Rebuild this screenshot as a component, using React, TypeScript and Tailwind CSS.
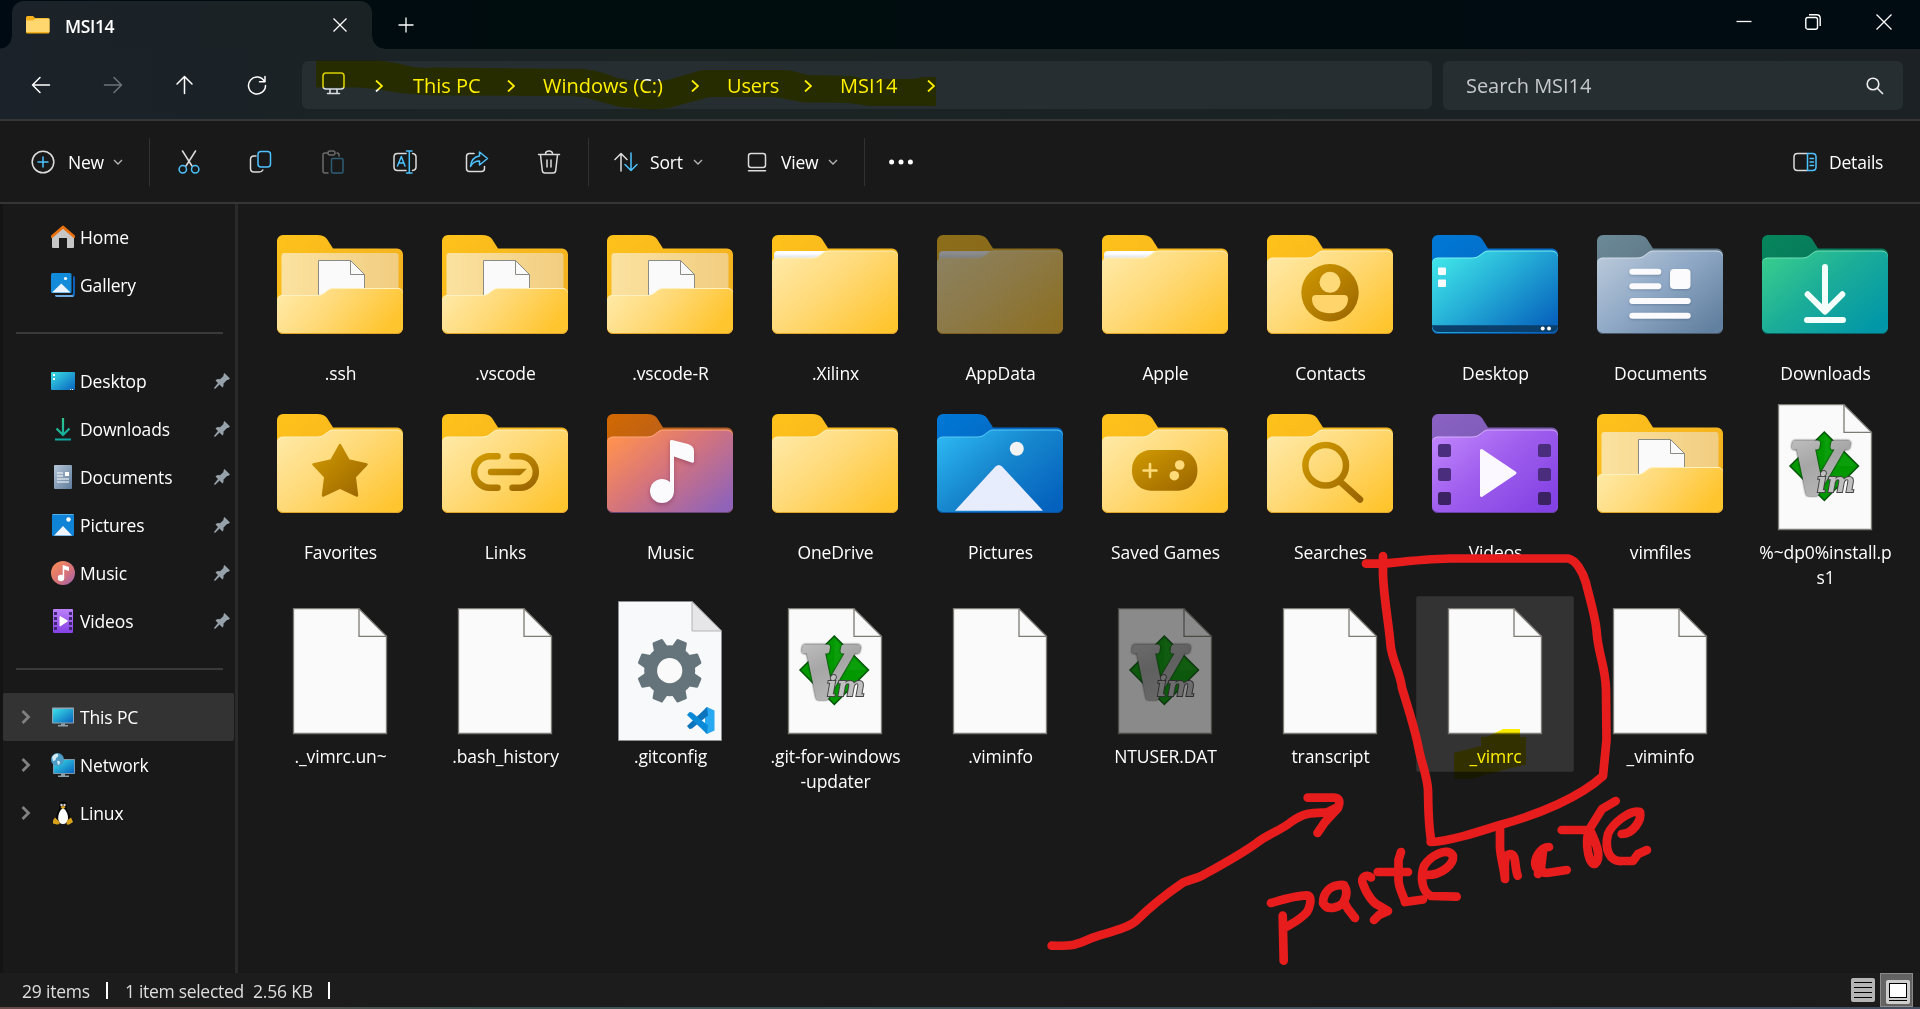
import React from "react";

type Colors = { back: [string, string]; front: [string, string, string]; edge: string; hi: string };

const PALETTES: Record<string, Colors> = {
  yellow: { back: ["#ffc21a", "#eeab22"], front: ["#ffe8a3", "#ffd976", "#ffc52f"], edge: "#e3a42a", hi: "#fff0bd" },
  music: { back: ["#d26900", "#93504b"], front: ["#ff9150", "#d6747b", "#9163b8"], edge: "#6b4478", hi: "#ffa67c" },
  blue: { back: ["#0078d6", "#0a55ab"], front: ["#2bb4f0", "#1787ce", "#0461bd"], edge: "#08529f", hi: "#5ac8f7" },
  desktop: { back: ["#0078d6", "#0860b5"], front: ["#3fe3e8", "#24acd6", "#0763bd"], edge: "#0b4d93", hi: "#7cf0f0" },
  docs: { back: ["#6c8a98", "#49586a"], front: ["#b6c6d8", "#90a9c6", "#62809f"], edge: "#475668", hi: "#d0dce8" },
  down: { back: ["#06865c", "#0a6259"], front: ["#36cb8e", "#1cad98", "#0096a8"], edge: "#0a6166", hi: "#6fe0b3" },
  video: { back: ["#8a62c4", "#6c51a0"], front: ["#bd82fb", "#9f5eed", "#8342e3"], edge: "#6b3fa8", hi: "#d5adff" },
};

const BACK = "M9 25a6 6 0 0 1 6-6H49q7 0 10 4L65 32.500H129a6 6 0 0 1 6 6V112a6 6 0 0 1-6 6H15a6 6 0 0 1-6-6Z";
const FRONT = "M9 47a5.500 5.500 0 0 1 5.500-5.500H49q5 0 9-3.500l3-2.300q2-1.200 4-1.200H129a6 6 0 0 1 6 6V110a6 6 0 0 1-6 6H15a6 6 0 0 1-6-6Z";
const FRONT_OPEN = "M9 84a5 5 0 0 1 5-5H49q5 0 8-3l4-3q2-1 4-1H130a5 5 0 0 1 5 5V110a6 6 0 0 1-6 6H15a6 6 0 0 1-6-6Z";

function Folder({ kind, dim = false, open = false, papers = false, children }: { kind: string; dim?: boolean; open?: boolean; papers?: boolean; children?: React.ReactNode }) {
  const c = PALETTES[kind];
  const id = React.useId();
  const b = id + "b";
  const f = id + "f";
  const front = open ? FRONT_OPEN : FRONT;
  return (
    <svg viewBox="0 0 144 144" className={dim ? "size-36 opacity-50" : "size-36"}>
      <defs>
        <linearGradient id={b} x1="0" y1="0" x2="1" y2="1"><stop offset="0" stopColor={c.back[0]} /><stop offset="1" stopColor={c.back[1]} /></linearGradient>
        <linearGradient id={f} gradientUnits="userSpaceOnUse" x1="30" y1={open ? 60 : 30} x2="108" y2="125">
          <stop offset="0" stopColor={c.front[0]} /><stop offset="0.45" stopColor={c.front[1]} /><stop offset="1" stopColor={c.front[2]} />
        </linearGradient>
        <linearGradient id={id + "i"} x1="0" y1="0" x2="1" y2="0"><stop offset="0" stopColor="#fbe2a0" /><stop offset="1" stopColor="#f1cd80" /></linearGradient>
        <linearGradient id={id + "m"} x1="0" y1="0" x2="1" y2="1"><stop offset="0" stopColor="#d19a00" /><stop offset="1" stopColor="#9a6500" /></linearGradient>
        <linearGradient id={id + "p"} x1="0" y1="0" x2="0" y2="1"><stop offset="0.3" stopColor="#ffffff" /><stop offset="1" stopColor="#d5dbe2" /></linearGradient>
      </defs>
      <path d={BACK} fill={`url(#${b})`} />
      {open && (
        <>
          <rect x="13.500" y="37" width="117" height="60" rx="3" fill={`url(#${id}i)`} />
          <path d="M50.500 44.500H82.500L96.500 58.500V90H50.500Z" fill="#fafafa" stroke="#8b8b86" />
          <path d="M82.500 44.500V58.500H96.500" fill="none" stroke="#8b8b86" />
        </>
      )}
      {papers && <path d="M11 39a4 4 0 0 1 4-4H66L57 43H11Z" fill={`url(#${id}p)`} />}
      <path d={front} transform="translate(0 2)" fill={c.edge} />
      <path d={front} fill={c.hi} />
      <path d={front} transform="translate(0 1)" fill={`url(#${f})`} />
      <g fill={`url(#${id}m)`} stroke={`url(#${id}m)`} strokeWidth="0">{children}</g>
    </svg>
  );
}

const WHITE = { fill: "#fbfbfd" };

function PageShape({ children, dim = false }: { children?: React.ReactNode; dim?: boolean }) {
  return (
    <svg viewBox="0 0 144 144" className={dim ? "size-36 opacity-50" : "size-36"}>
      <path d="M25.500 9.700H91L118.500 37.300V134.500H25.500Z" fill="#fafafa" stroke="#7d7b76" strokeWidth="1.300" />
      <path d="M91 9.700V37.300H118.500" fill="none" stroke="#7d7b76" strokeWidth="1.300" />
      {children}
    </svg>
  );
}

function VimMark() {
  const id = React.useId();
  return (
    <g>
      <defs>
        <linearGradient id={id} x1="0" y1="0" x2="0.300" y2="1"><stop offset="0" stopColor="#c8c8c8" /><stop offset="0.500" stopColor="#a6a6a6" /><stop offset="1" stopColor="#b8b8b8" /></linearGradient>
      </defs>
      <path d="M71.300 37L105.500 71L71.300 105.500L37 71Z" fill="#019800" stroke="#04550a" strokeWidth="1.500" />
      <path d="M71.300 39.500L103 71L71.300 71Z" fill="#16a516" opacity="0.500" />
      <g className="drop-shadow-[0_0_1px_#111111]">
        <text x="37.500" y="98" fontFamily="DejaVu Serif" fontWeight="700" fontStyle="italic" fontSize="70" textLength="52" lengthAdjust="spacingAndGlyphs" fill={`url(#${id})`} stroke={`url(#${id})`} strokeWidth="5" strokeLinejoin="round">V</text>
      </g>
      <text x="64" y="96.500" fontFamily="DejaVu Serif" fontWeight="700" fontStyle="italic" fontSize="27" textLength="38" lengthAdjust="spacingAndGlyphs" fill="#c0c0c0" stroke="#444" strokeWidth="2" paintOrder="stroke">im</text>
    </g>
  );
}

function GearPage() {
  return (
    <svg viewBox="0 0 144 144" className="size-36">
      <path d="M20.500 2.500H94.500L123.500 32V141.500H20.500Z" fill="#f8f9fa" stroke="#8c9092" />
      <path d="M94 3V32H123.500Z" fill="#e6e6e8" stroke="#a5a5a8" strokeWidth="0.800" />
      <g transform="translate(71.700 71.700)" fill="#64747a">
        {[22.5, 67.5, 112.5, 157.5, 202.5, 247.5, 292.5, 337.5].map((a) => (
          <path key={a} transform={`rotate(${a})`} d="M-8 -20L-5.500 -31.500Q-5.200 -32.500 -4 -32.500H4Q5.200 -32.500 5.500 -31.500L8 -20Z" />
        ))}
        <circle r="25.500" />
        <circle r="12.600" fill="#fafafb" />
      </g>
      <path d="M109 108L116.500 111.500V131.500L109 135L107 133V110Z" fill="#29a8f2" />
      <path d="M109 108L110 116.500L94 129.500L91.500 130L89 127Z" fill="#0b74bd" />
      <path d="M109 135L110 126.500L94 113.500L91.500 113L89 116Z" fill="#0a8ad6" />
    </svg>
  );
}

type Item = { name: string; second?: string; art: React.ReactNode; selected?: boolean };

const NoteArt = (
  <g {...WHITE} className="drop-shadow-[0_2px_2px_rgba(80,20,60,0.35)]">
    <circle cx="64" cy="96" r="12" />
    <path d="M72 46.500Q72 44.500 74 45L90 49Q96 51 96 56V66Q96 68.500 93.500 67.500L76 61.500V96H72Z" />
  </g>
);

const items: Item[] = [
  { name: ".ssh", art: <Folder kind="yellow" open /> },
  { name: ".vscode", art: <Folder kind="yellow" open /> },
  { name: ".vscode-R", art: <Folder kind="yellow" open /> },
  { name: ".Xilinx", art: <Folder kind="yellow" papers /> },
  { name: "AppData", art: <Folder kind="yellow" papers dim /> },
  { name: "Apple", art: <Folder kind="yellow" papers /> },
  { name: "Contacts", art: (
    <Folder kind="yellow">
      <circle cx="72" cy="76.700" r="28.700" />
      <circle cx="72" cy="66.300" r="10.500" fill="#ffda79" />
      <path d="M58 79H86Q90 79 90 83C90 92 82 97.300 72 97.300S54 92 54 83Q54 79 58 79Z" fill="#ffd56b" />
    </Folder>) },
  { name: "Desktop", art: (
    <Folder kind="desktop">
      <rect x="15" y="51.500" width="8" height="7.500" rx="1" {...WHITE} />
      <rect x="15" y="63.500" width="8" height="7.500" rx="1" {...WHITE} />
      <path d="M9 109.300H135V110Q134 116 128 116H16Q10 116 9 110Z" fill="#0a3f6b" />
      <circle cx="119.700" cy="112.500" r="2" {...WHITE} /><circle cx="126" cy="112.500" r="2" {...WHITE} />
    </Folder>) },
  { name: "Documents", art: (
    <Folder kind="docs">
      <g {...WHITE} className="drop-shadow-[0_1px_1px_rgba(40,60,90,0.3)]">
        <rect x="41.300" y="52.700" width="32" height="6" rx="3" /><rect x="41.300" y="67.200" width="32" height="6" rx="3" />
        <rect x="41.300" y="82" width="61.400" height="6" rx="3" /><rect x="41.300" y="96.700" width="61.400" height="6" rx="3" />
        <rect x="82" y="53" width="20.500" height="20" rx="4" />
      </g>
    </Folder>) },
  { name: "Downloads", art: (
    <Folder kind="down">
      <path d="M72 51V95M54.700 78.300L72 95.500L89.300 78.300M54 104H90" fill="none" stroke="#f4fffb" strokeWidth="6" strokeLinecap="round" strokeLinejoin="round" />
    </Folder>) },
  { name: "Favorites", art: (
    <Folder kind="yellow">
      <path d="M72 50L80.700 65.500L98.500 69.500L86.700 82L89 100.500L72 92.700L55 100.500L57.300 82L45.500 69.500L63.300 65.500Z" strokeWidth="2.500" strokeLinejoin="round" />
    </Folder>) },
  { name: "Links", art: (
    <Folder kind="yellow">
      <path d="M64.500 61.200H57a15.800 15.800 0 0 0 0 31.600H64.500M79.500 61.200H87a15.800 15.800 0 0 1 0 31.600H79.500M58 77H86.010L86 77.010" fill="none" strokeWidth="6.500" strokeLinecap="round" />
    </Folder>) },
  { name: "Music", art: <Folder kind="music">{NoteArt}</Folder> },
  { name: "OneDrive", art: <Folder kind="yellow" /> },
  { name: "Pictures", art: (
    <Folder kind="blue">
      <circle cx="88.800" cy="53.700" r="7" fill="#f3f3f3" />
      <path d="M27 115.700L67.500 71.500Q70.800 68.500 74 71.500L115 115.700Z" fill="#e8edfd" />
    </Folder>) },
  { name: "Saved Games", art: (
    <Folder kind="yellow">
      <rect x="39" y="55" width="65.400" height="40.700" rx="19" />
      <path d="M57 69V82M50.500 75.500H63.500" fill="none" stroke="#ffda79" strokeWidth="2.600" strokeLinecap="round" />
      <circle cx="86.700" cy="70" r="4.800" fill="#ffda79" /><circle cx="81.300" cy="80.700" r="4.800" fill="#ffda79" />
    </Folder>) },
  { name: "Searches", art: (
    <Folder kind="yellow">
      <path d="M88 70.300a20.300 20.300 0 1 1-40.600 0a20.300 20.300 0 1 1 40.600 0M82 86.500L102 104.500" fill="none" strokeWidth="6.500" strokeLinecap="round" />
    </Folder>) },
  { name: "Videos", art: (
    <Folder kind="video">
      <g fill="#4a2d7c">
        <rect x="15" y="49" width="13" height="13" rx="2.500" /><rect x="115" y="49" width="13" height="13" rx="2.500" />
        <rect x="15" y="73" width="13" height="13" rx="2.500" /><rect x="115" y="73" width="13" height="13" rx="2.500" />
        <rect x="15" y="97" width="13" height="13" rx="2.500" fill="#3b2263" /><rect x="115" y="97" width="13" height="13" rx="2.500" fill="#3b2263" />
      </g>
      <path d="M58.500 55.500L92 78L58.500 100.500Z" fill="#fbf8ff" stroke="#fbf8ff" strokeWidth="3" strokeLinejoin="round" />
    </Folder>) },
  { name: "vimfiles", art: <Folder kind="yellow" open /> },
  { name: "%~dp0%install.p", second: "s1", art: <PageShape><VimMark /></PageShape> },
  { name: "._vimrc.un~", art: <PageShape /> },
  { name: ".bash_history", art: <PageShape /> },
  { name: ".gitconfig", art: <GearPage /> },
  { name: ".git-for-windows", second: "-updater", art: <PageShape><VimMark /></PageShape> },
  { name: ".viminfo", art: <PageShape /> },
  { name: "NTUSER.DAT", art: <PageShape dim><VimMark /></PageShape> },
  { name: "transcript", art: <PageShape /> },
  { name: "_vimrc", art: <PageShape />, selected: true },
  { name: "_viminfo", art: <PageShape /> },
];

function FileTile({ item }: { item: Item }) {
  return (
    <div className={`flex w-[158px] flex-col items-center self-start rounded-xs border pt-0.5 ${item.selected ? "h-44 border-[#2c2c2c] bg-[#333333]" : "border-transparent"}`}>
      {item.art}
      <div className="mt-px pl-px text-center text-[17.5px]/[25px] tracking-[-0.1px] whitespace-nowrap text-white">
        <div>{item.name}</div>
        {item.second && <div>{item.second}</div>}
      </div>
    </div>
  );
}

/* Sidebar icons, all on a 24px grid */
const side: Record<string, React.ReactNode> = {
  Home: (<><path d="M1 11L12 2L23 11V22Q23 23 22 23H16V13H8V23H2Q1 23 1 22Z" fill="#c6c6c6" /><path d="M1 11.500L12 2L23 11.500" fill="none" stroke="#e8710c" strokeWidth="2.800" strokeLinejoin="round" strokeLinecap="round" /></>),
  Gallery: (<><path d="M22 3Q24 3 24 5V21Q24 24 21 24H6Q4 24 4 22H20Q22 22 22 20Z" fill="#0b62bd" /><path d="M4 22H20.500Q22 22 23 22.500L22 24H6Q4 24 4 22Z" fill="#6da8df" /><rect width="20.500" height="20" rx="1.500" fill="#128bdb" /><path d="M1 19.500L10.300 10.500L19.500 19.500Z" fill="#e9f2ff" /><circle cx="14.500" cy="5.500" r="1.600" fill="#fff" /></>),
  Desktop: (<><defs><linearGradient id="sd" x1="0" y1="0" x2="1" y2="1"><stop stopColor="#3bdfe6" /><stop offset="1" stopColor="#0863bf" /></linearGradient></defs><rect y="3" width="24" height="18" rx="1" fill="url(#sd)" /><path d="M2 5h2v2h-2zM2 9h2v2h-2zM19 20h1v1h-1zM21 20h1v1h-1z" fill="#fff" /></>),
  Downloads: (<><defs><linearGradient id="sl" gradientUnits="userSpaceOnUse" x1="6" y1="2" x2="18" y2="24"><stop stopColor="#34cc8c" /><stop offset="1" stopColor="#079fa5" /></linearGradient></defs><path d="M12 1V18M5.500 11.500L12 18L18.500 11.500M4 22.500H20" fill="none" stroke="url(#sl)" strokeWidth="2.200" /></>),
  Documents: (<><defs><linearGradient id="sc" x1="0" y1="0" x2="1" y2="1"><stop stopColor="#b5c6d8" /><stop offset="1" stopColor="#5f7c9c" /></linearGradient></defs><rect x="3" width="18" height="24" rx="1" fill="url(#sc)" /><path d="M6 8H12M6 11H12M6 14H18M6 17H18" stroke="#fff" strokeWidth="1.100" /><rect x="14" y="7" width="4" height="4" fill="#fff" /></>),
  Pictures: (<><rect x="1" y="1" width="22" height="22" rx="1.500" fill="#0f83d6" /><path d="M1.500 1.500h21" stroke="#53b1ee" /><path d="M3 22.500L12 13L21 22.500Z" fill="#f0f4ff" /><circle cx="17.500" cy="6.500" r="2.200" fill="#fff" /></>),
  Music: (<><defs><linearGradient id="sm" x1="0" y1="0" x2="1" y2="1"><stop stopColor="#fb8f52" /><stop offset="0.600" stopColor="#d4707c" /><stop offset="1" stopColor="#9a62b3" /></linearGradient></defs><circle cx="12" cy="12" r="12" fill="url(#sm)" /><circle cx="10" cy="17" r="3.200" fill="#fff" /><path d="M11.700 4L18 6V10L13.200 8.500V17H11.700Z" fill="#fff" /></>),
  Videos: (<><defs><linearGradient id="sv" x1="0" y1="0" x2="0" y2="1"><stop stopColor="#bb80fa" /><stop offset="1" stopColor="#8441e3" /></linearGradient></defs><rect x="2" width="20" height="24" rx="1" fill="url(#sv)" /><path d="M3 3h3v3h-3zM3 8h3v3h-3zM3 13h3v3h-3zM3 18h3v3h-3zM18 3h3v3h-3zM18 8h3v3h-3zM18 13h3v3h-3zM18 18h3v3h-3z" fill="#3f2672" /><path d="M9 7.500L16.500 12L9 17Z" fill="#fff" stroke="#fff" strokeLinejoin="round" /></>),
  "This PC": (<><rect x="1" y="2.500" width="22" height="16" rx="0.800" fill="#8fa6b5" /><rect x="2" y="4" width="20" height="13.500" fill="url(#sd)" /><path d="M10 18.500h4v1.500h3v1.500H7v-1.500h3z" fill="#8fa0ad" /></>),
  Network: (<><rect x="2" y="6" width="22" height="15" rx="0.800" fill="#7c98aa" /><rect x="3" y="7" width="20" height="13" fill="url(#sd)" /><path d="M10 21h4v1.500h4V24H7v-1.500h3z" fill="#8fa0ad" /><circle cx="6.500" cy="6.500" r="6.500" fill="#4d9ac4" /><path d="M1 4Q4 0 7 1Q8 4 5 5Q5 8 2 8ZM6 8Q9 7 9 10Q8 12 7 12Z" fill="#d3ebf5" /></>),
  Linux: (<><path d="M12 0C8.500 0 8.200 3 8.500 6C8 10 4.500 12 5 18L7 22H17L19.500 18C19.500 12 16 10 15.500 6C15.800 3 15.500 0 12 0Z" fill="#080808" /><path d="M12 7C9 9 7 13 7.200 18Q8 23 12 23T17 18C17.200 13 15 9 12 7Z" fill="#fff" /><circle cx="10.500" cy="4" r="1.200" fill="#ddd" /><circle cx="13.500" cy="4" r="1.200" fill="#ddd" /><path d="M9.500 6Q12 4 14.500 6Q12 9.500 9.500 6Z" fill="#e0a316" /><path d="M4 16.500L9 21.500Q8.500 24 6 23.500L2 22.500Q1.500 19 4 16.500ZM20 16.500L16 19.500L15.500 23Q17 24.500 19 23L22 21Z" fill="#d9a21b" /></>),
};

function SideRow({ name, pin, expand, active }: { name: string; pin?: boolean; expand?: boolean; active?: boolean }) {
  return (
    <div className={`flex h-12 w-[231px] items-center rounded-xs ${active ? "bg-[#333333]" : ""}`}>
      <div className="flex w-12 justify-center pr-0.5">
        {expand && (<svg viewBox="0 0 10 16" className="h-4 w-2.5"><path d="M1.500 2L7.500 8L1.500 14" fill="none" stroke="#818181" strokeWidth="2.800" /></svg>)}
      </div>
      <svg viewBox="0 0 24 24" className="size-6">{side[name]}</svg>
      <span className="ml-[5px] flex-1 text-[17.5px]/6 tracking-[-0.15px] whitespace-nowrap">{name}</span>
      {pin && (<svg viewBox="0 0 16 16" className="mr-1 size-4"><path d="M10.500 0L16 5.500L14 7L13 7L9.500 10.500Q10 13 8.500 14.500L5.500 11.500L1 16L0 15L4 10L1.500 7.500Q3.500 5.500 6 6.300L9.500 3V1.500Z" fill="#97a1a9" /></svg>)}
    </div>
  );
}

const Rule = () => (<div className="flex h-12 items-center pb-px"><div className="ml-[13px] h-0.5 w-[207px] bg-[#3a3a3a]" /></div>);
const Crumb = () => (<svg viewBox="0 0 8 12" className="h-3 w-2 shrink-0"><path d="M1 0.500L7 6L1 11.500" fill="none" stroke="#fff" strokeWidth="1.800" /></svg>);
const Down = () => (<svg viewBox="0 0 10 6" className="h-1.5 w-2.5 shrink-0"><path d="M1 1L5 5L9 1" fill="none" stroke="#b5b5b5" strokeWidth="1.300" /></svg>);
const Divider = ({ className }: { className: string }) => <div className={`h-12 w-px bg-[#313131] ${className}`} />;

function Ico({ children, className = "" }: { children: React.ReactNode; className?: string }) {
  return (<svg viewBox="0 0 24 24" className={`size-6 shrink-0 ${className}`} fill="none" stroke="#dcdcdc" strokeWidth="1.500" strokeLinecap="round" strokeLinejoin="round">{children}</svg>);
}

/* Red pen strokes drawn over the window */
function Ink() {
  return (
    <svg viewBox="0 0 1920 1009" className="pointer-events-none absolute inset-0 h-[1009px] w-[1920px]" fill="none" stroke="#e71d1d" strokeWidth="8.700" strokeLinecap="round" strokeLinejoin="round">
      <path d="M1366 563.700H1383C1400 562 1425 559 1450 558.500L1568 558.500C1576 560 1583 572 1586 583C1590 600 1595 615 1596.500 630C1598 655 1605.500 665 1606 690L1606.500 740L1603 776C1580 797 1540 814 1500 825C1475 833 1450 841 1430.700 842" />
      <path d="M1383 556V575C1384 600 1389 625 1390.500 645C1392 660 1400 672 1402 688C1407 705 1415 728 1419 750C1422 765 1427 775 1428 790C1428.500 810 1428 820 1431 840" />
      <path d="M1051.700 945.700C1075 946 1076 945 1093 937.500C1110 932 1128 928 1136 921C1150 907 1165 895 1183 882.700C1190 879 1197 879 1205 874C1225 863 1243 853 1257 842.700C1268 834 1280 831 1291 822C1305 812 1313 813 1327 812.500L1336 808" />
      <path d="M1307.700 797.700H1334Q1342 798 1338 808L1325 822L1317.500 833" />
      <path d="M1271 903C1285 899 1298 895 1308 895.500C1313 898 1309 909 1307 912C1300 920 1295 922 1286 927M1282.700 915.700L1283.700 960.700" />
      <path d="M1344 885C1330 884 1323 893 1323 903C1327 911 1338 908 1343 903C1348 895 1347 888 1343 885M1344 902L1348 909L1355 918" />
      <path d="M1371 877.500C1366 873 1360 878 1363 884C1366 893 1373 903 1378 905L1388 911L1379 915L1374 920" />
      <path d="M1401 852L1398.500 860V880C1399 890 1404 896 1405 902L1423 899.500M1377.700 872H1408" />
      <path d="M1427 875C1442 875 1454 864 1453 856C1448 846 1430 856 1424 866C1420 878 1422 892 1431 896L1456.700 896.700" />
      <path d="M1500 827V848C1501 860 1504 868 1505 879C1505 868 1503 855 1510 854C1517 854 1514 866 1517.700 875.700" />
      <path d="M1549 847C1540 847 1533 860 1536 867Q1540 874 1550 872.500L1566.700 870M1541 853L1538 874M1543 851L1541 868" />
      <path d="M1561.700 830H1589L1602 809L1615.700 801M1589 830C1585 842 1588 864 1595 864C1602 858 1597 845 1591 832" />
      <path d="M1621.700 834C1633 834 1642 820 1640 812C1630 809 1612 824 1608 834C1604 850 1610 862 1622 861H1633L1638 854L1647 850" />
    </svg>
  );
}

/* Yellow highlighter over the path bar and the selected file name */
function Highlighter() {
  return (
    <svg viewBox="0 0 1920 1009" className="pointer-events-none absolute inset-0 h-[1009px] w-[1920px] mix-blend-multiply" fill="#fff000">
      <path d="M316 60.500H377.500Q390 61 404 65T433 67.500L584 69Q600 71 612 76T640 80Q652 82 661 81T681 76L702 70H789L808 75L853 76L865 79H914L922 77H936V106H869L849 103L804 102.500L775 97H710L689 102.500L669 108L653 109.500L620 107L605 103L584 97L571 96L429 95.500L400 93L375 89L359 87.500H316Z" />
      <path d="M1454 752.700L1481 746V737L1488 736.500L1503 729H1520V737H1526V764.700L1507 769L1472 778.700H1454Z" />
    </svg>
  );
}

export default function App() {
  return (
    <div className="relative isolate flex h-[1009px] w-[1920px] flex-col overflow-hidden bg-[#191919] font-['Open_Sans',sans-serif] text-white">
      <header className="flex h-[49px] shrink-0 bg-linear-to-r from-[#000a13] via-[#000d0e] via-30% to-[#000b12]">
        <div className="flex w-3 items-end"><div className="size-3 bg-[radial-gradient(circle_at_0_0,transparent_11px,#1b2228_12px)]" /></div>
        <div className="mt-px flex w-[360px] items-center rounded-t-xl bg-linear-to-r from-[#1b2229] to-[#1b2224] pr-[25px] pl-3.5">
          <svg viewBox="0 0 24 18" className="h-[18px] w-6"><path d="M0 1.500Q0 0 1.500 0H7L9 2H22Q23.500 2 23.500 4V16Q23.500 17.500 22 17.500H1.500Q0 17.500 0 16Z" fill="#f4b01d" /><path d="M0 4.500H7L9.500 2.800H23.500V16H0Z" fill="#ffd76e" /></svg>
          <span className="ml-[15px] flex-1 pt-px text-[17.5px]/6 font-semibold tracking-[-0.4px]">MSI14</span>
          <svg viewBox="0 0 14 14" className="size-3.5"><path d="M0.500 0.500L13.500 13.500M13.500 0.500L0.500 13.500" stroke="#fff" strokeWidth="1.300" /></svg>
        </div>
        <div className="flex w-3 items-end"><div className="size-3 bg-[radial-gradient(circle_at_100%_0,transparent_11px,#1b2224_12px)]" /></div>
        <svg viewBox="0 0 16 16" className="mt-[17px] ml-3.5 size-4"><path d="M8 0.500V15.500M0.500 8H15.500" stroke="#fff" strokeWidth="1.300" /></svg>
        <div className="mt-3.5 mr-7 ml-auto flex h-4 items-center">
          <svg viewBox="0 0 16 16" className="mr-[53px] size-4"><path d="M0.500 7.500H15.500" stroke="#fff" strokeWidth="1.300" /></svg>
          <svg viewBox="0 0 16 16" className="mr-[55px] size-4" fill="none" stroke="#fff" strokeWidth="1.400"><rect x="0.800" y="3.500" width="11.700" height="11.700" rx="2" /><path d="M4 0.800H11.500Q15.200 0.800 15.200 4.500V12" /></svg>
          <svg viewBox="0 0 16 16" className="size-4"><path d="M0.500 0.500L15.500 15.500M15.500 0.500L0.500 15.500" stroke="#fff" strokeWidth="1.300" /></svg>
        </div>
      </header>

      <nav className="flex h-[70px] shrink-0 items-center bg-linear-to-r from-[#1b2229] via-[#1b2323] via-35% to-[#1b2125] pt-0.5">
        <div className="flex w-[302px] items-center gap-12 pl-[29px]">
          <Ico><path d="M3.500 12H20.500M11 4.500L3.500 12L11 19.500" stroke="#fff" /></Ico>
          <Ico><path d="M3.500 12H20.500M13 4.500L20.500 12L13 19.500" stroke="#6f7477" /></Ico>
          <Ico><path d="M11.500 3.500V20.500M4 11L11.500 3.500L19 11" stroke="#fff" /></Ico>
          <Ico><path d="M19.500 8.500A8.500 8.500 0 1 0 20.500 12.500M20 3.500V8.800H14.500" stroke="#fff" /></Ico>
        </div>
        <div className="flex h-12 w-[1130px] items-center rounded-md bg-[#262e31] pt-px pl-5 text-xl">
          <svg viewBox="0 0 23 23" className="mb-1 h-[23px] w-[23px] shrink-0" fill="none" stroke="#d9dde0" strokeWidth="1.600" strokeLinecap="round"><rect x="1" y="1" width="21" height="16" rx="3" /><path d="M8 17.500V21M15 17.500V21M5.500 21.500H17.500" /></svg>
          <div className="w-[30px]" /><Crumb />
          <span className="ml-[30px] w-[94px] shrink-0">This PC</span><Crumb />
          <span className="ml-7 w-[148px] shrink-0 whitespace-nowrap">Windows (C:)</span><Crumb />
          <span className="ml-7 w-[77px] shrink-0 tracking-[-0.2px]">Users</span><Crumb />
          <span className="ml-7 w-[87px] shrink-0">MSI14</span><Crumb />
        </div>
        <div className="ml-[11px] flex h-[49px] w-[460px] items-center rounded-md bg-[#272e32] pt-px pr-[19px] pl-[23px] text-xl text-[#c6c9cb]">
          <span className="flex-1 tracking-[-0.05px]">Search MSI14</span>
          <svg viewBox="0 0 18 18" className="size-[18px]" fill="none" stroke="#eee" strokeWidth="1.600"><circle cx="7" cy="7" r="5.800" /><path d="M11.300 11.300L17 17" /></svg>
        </div>
      </nav>

      <div className="flex h-[85px] shrink-0 items-center border-y-2 border-[#363636] bg-[#191919] pl-[31px] text-[17.5px] tracking-[-0.2px]">
        <Ico><circle cx="12" cy="12" r="10.800" /><path d="M12 7V17M7 12H17" stroke="#4cc2ff" /></Ico>
        <span className="ml-[13px] w-[45px] pt-0.5">New</span><Down />
        <Divider className="mr-[27px] ml-[26px]" />
        <div className="flex gap-12">
          <Ico><path d="M5.500 1L15 16M18.500 1L9 16" /><circle cx="5.800" cy="19.300" r="3.700" stroke="#4cc2ff" /><circle cx="18.200" cy="19.300" r="3.700" stroke="#4cc2ff" /></Ico>
          <Ico><path d="M7 6H5Q1.500 6 1.500 9.500V18.500Q1.500 22 5 22H10Q13 22 13.800 20" /><rect x="9" y="1.500" width="12.500" height="15.500" rx="3" stroke="#4cc2ff" /></Ico>
          <Ico><path d="M7 23H4Q2 23 2 21V5Q2 3 4 3H6M16 3Q18 3 18 5V6M7 3Q7 1 9 1H12Q14 1 14 3T12 5H9Q7 5 7 3Z" stroke="#6b6b6b" /><rect x="10.500" y="8.500" width="11.500" height="14.500" rx="1.500" stroke="#2d5d75" /></Ico>
          <Ico><path d="M13 3.500H4.500Q1 3.500 1 7V17Q1 20.500 4.500 20.500H13M19.500 3.500Q23 4 23 7V17Q23 20 19.500 20.500" /><path d="M16.300 1V23M13.500 1H19M13.500 23H19M4.500 16L8.300 6.500L12 16M5.800 13H10.800" stroke="#4cc2ff" /></Ico>
          <Ico><path d="M9 3.500H4.500Q1.500 3.500 1.500 6.500V18.500Q1.500 21.500 4.500 21.500H16.500Q19.500 21.500 19.500 18.500V16.500" /><path d="M14.500 2L22.500 8.500L14.500 15V11Q8.500 11 5.500 16.500Q6.500 7 14.500 6Z" stroke="#4cc2ff" /></Ico>
          <Ico><path d="M1.500 4.500H22.500M8.500 4Q8.500 1 12 1T15.500 4M3.500 5L5.300 20.500Q5.500 23 8 23H16Q18.500 23 18.700 20.500L20.500 5M10 10V17M14 10V17" /></Ico>
        </div>
        <Divider className="mr-[25px] ml-[27px]" />
        <Ico><path d="M7 21V3.500M1 9.500L7 3.500L13 9.500" /><path d="M17 3V20.500M11 14.500L17 20.500L23 14.500" stroke="#4cc2ff" /></Ico>
        <span className="ml-3 w-[43px] pt-0.5">Sort</span><Down />
        <Ico className="ml-[42px]"><rect x="3.500" y="3.500" width="17" height="14" rx="2.500" /><path d="M3.500 20.800H20.500" /></Ico>
        <span className="ml-3 w-[47px] pt-0.5">View</span><Down />
        <Divider className="mr-6 ml-[26px]" />
        <svg viewBox="0 0 24 6" className="h-1.5 w-6" fill="#fff"><circle cx="2.600" cy="3" r="2.500" /><circle cx="12" cy="3" r="2.500" /><circle cx="21.400" cy="3" r="2.500" /></svg>
        <Ico className="ml-auto"><path d="M14 3.500H4.500Q1 3.500 1 7V17Q1 20.500 4.500 20.500H14" /><path d="M14.500 3.500H19.500Q23 3.500 23 7V17Q23 20.500 19.500 20.500H14.500ZM17 8.500H20.500M17 12H20.500M17 15.500H20.500" stroke="#4cc2ff" /></Ico>
        <span className="ml-3 w-[91px] pt-0.5">Details</span>
      </div>

      <main className="flex h-[769px] shrink-0">
        <aside className="flex w-[238px] flex-col border-r-[3px] border-l-[3px] border-l-[#141414] border-r-[#2a2a2a] pt-[9px]">
          <SideRow name="Home" />
          <SideRow name="Gallery" />
          <Rule />
          <SideRow name="Desktop" pin />
          <SideRow name="Downloads" pin />
          <SideRow name="Documents" pin />
          <SideRow name="Pictures" pin />
          <SideRow name="Music" pin />
          <SideRow name="Videos" pin />
          <Rule />
          <SideRow name="This PC" expand active />
          <SideRow name="Network" expand />
          <SideRow name="Linux" expand />
        </aside>
        <section className="grid grid-cols-[repeat(10,158px)] grid-rows-[176px_201px_201px] gap-x-[7px] gap-y-[3px] pt-[9px] pl-[23px]">
          {items.map((it) => <FileTile key={it.name} item={it} />)}
        </section>
      </main>

      <footer className="flex h-[34px] shrink-0 items-center bg-[#1c1c1c] pl-[22px] text-[17.5px] tracking-[-0.2px] whitespace-nowrap text-[#dedede]">
        <span className="w-[84px] pt-[3px]">29 items</span>
        <div className="h-[17px] w-0.5 bg-white" />
        <span className="ml-[17px] w-32 pt-[3px] tracking-[-0.3px]">1 item selected</span>
        <span className="w-[75px] pt-[3px]">2.56 KB</span>
        <div className="h-[17px] w-0.5 bg-white" />
        <svg viewBox="0 0 24 24" className="ml-auto size-6"><rect width="24" height="24" rx="2" fill="#b4b4b4" /><path d="M3 4.500H21M3 9.500H21M3 14.500H21M3 19.500H21" stroke="#000" /></svg>
        <div className="mr-[7px] ml-[5px] flex h-[34px] w-[33px] items-center justify-center border border-[#8a8a8a] bg-[#636363] pt-1 pl-0.5">
          <svg viewBox="0 0 24 24" className="size-6"><rect width="24" height="24" rx="2" fill="#cdcdcd" /><rect x="3.500" y="3.500" width="17" height="14" fill="#fff" stroke="#000" /><path d="M3 20.500H21" stroke="#000" /></svg>
        </div>
      </footer>
      <div className="h-0.5 shrink-0 bg-linear-to-r from-[#6b4a4a] via-[#3f5552] via-25% to-[#454f63]" />

      <Highlighter />
      <Ink />
    </div>
  );
}
